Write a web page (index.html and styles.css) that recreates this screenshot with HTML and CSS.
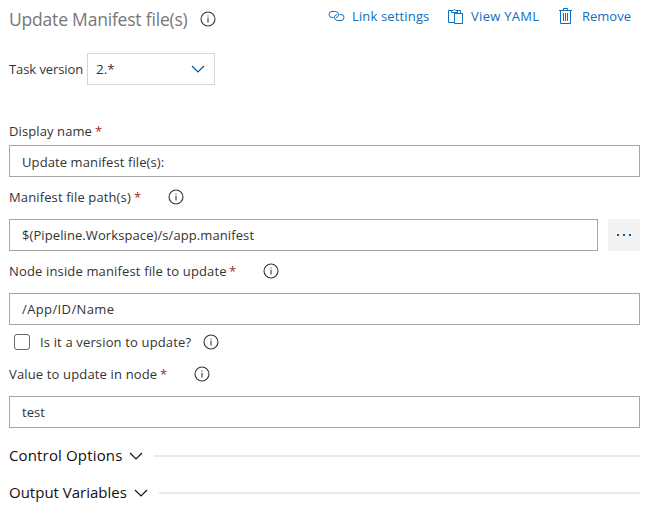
FILE: index.html
```
<!DOCTYPE html>
<html lang="en">
<head>
<meta charset="utf-8">
<title>Update Manifest file(s)</title>
<link rel="stylesheet" href="styles.css">
</head>
<body>
<svg class="defs" width="0" height="0" aria-hidden="true">
  <symbol id="info" viewBox="0 0 16 16"><circle cx="8" cy="8" r="7"/><path d="M8 6.8v4.7M8 4.4v1.2"/></symbol>
  <symbol id="chevron" viewBox="0 0 14 8"><path d="M1 1l6 6 6-6"/></symbol>
</svg>
<main class="panel">
  <header class="header">
    <h1 class="title">Update Manifest file(s)</h1>
    <svg class="info"><use href="#info"/></svg>
    <nav class="actions">
      <a class="action link"><svg class="icon" viewBox="0 0 17 12"><path d="M5.500 7.500H4A3 3 0 0 1 4 1.500H7.500A3 3 0 0 1 10.300 5.500Q9.800 7.300 8 7.500M11.500 4.500H13A3 3 0 0 1 13 10.500H9.500A3 3 0 0 1 6.700 6.500Q7.200 4.700 9 4.500"/></svg><span>Link settings</span></a>
      <a class="action yaml"><svg class="icon" viewBox="0 0 15 16"><path d="M6 14.500H.5v-12H4M9 2.500h3.500v3M3.500 4.500v-2h1.700a1.400 1.400 0 0 1 2.600 0h1.700v2zM6.500 5.500h8v10h-8z"/></svg><span>View YAML</span></a>
      <a class="action remove"><svg class="icon" viewBox="0 0 13 16"><path d="M0 2.500H13M4.500 2.500V.5H8.500V2.500M1.500 2.500V15.500H11.500V2.500M4.500 5V13M6.500 5V13M8.500 5V13"/></svg><span>Remove</span></a>
    </nav>
  </header>
  <div class="version">
    <label class="version-label">Task version</label>
    <div class="select"><span>2.*</span><svg class="chevron"><use href="#chevron"/></svg></div>
  </div>
  <div class="label first"><span class="t-display">Display name</span><b>*</b></div>
  <div class="input name"><span class="v-display">Update manifest file(s):</span></div>
  <div class="label"><span class="t-path">Manifest file path(s)</span><b>*</b><svg class="info"><use href="#info"/></svg></div>
  <div class="row"><div class="input"><span class="v-path">$(Pipeline.Workspace)/s/app.manifest</span></div><button class="more"><i></i><i></i><i></i></button></div>
  <div class="label"><span class="t-node">Node inside manifest file to update</span><b>*</b><svg class="info"><use href="#info"/></svg></div>
  <div class="input"><span class="v-node">/App/ID/Name</span></div>
  <div class="check"><span class="box"></span><span class="t-check">Is it a version to update?</span><svg class="info"><use href="#info"/></svg></div>
  <div class="label value"><span class="t-value">Value to update in node</span><b>*</b><svg class="info"><use href="#info"/></svg></div>
  <div class="input"><span class="v-test">test</span></div>
  <div class="section control"><span>Control Options</span><svg class="chevron"><use href="#chevron"/></svg><hr></div>
  <div class="section output"><span>Output Variables</span><svg class="chevron"><use href="#chevron"/></svg><hr></div>
</main>
</body>
</html>
```
FILE: styles.css
```
* { box-sizing: border-box; }
body { margin: 0; background: #fff; color: #333; font: 13px/20px "Open Sans", "Noto Sans", sans-serif; }
.defs { position: absolute; }
svg { display: block; flex: none; fill: none; stroke: currentColor; }
span, .version-label, .title { white-space: nowrap; }
.panel { width: 640px; padding-left: 9px; }
.header { display: flex; align-items: center; height: 38px; }
.title { width: 191px; margin: 0; font-size: 17.5px; font-weight: 400; line-height: 24px; color: #777; letter-spacing: -.2px; }
.info { width: 16px; height: 16px; stroke-width: 1.1; color: #333; }
.actions { display: flex; margin-left: 112px; color: #106ebe; height: 32px; margin-bottom: 6px; }
.action { display: flex; align-items: center; }
.link { width: 120px; letter-spacing: .15px; }
.yaml { width: 111px; letter-spacing: .3px; }
.link .icon { width: 17px; height: 12px; margin-right: 7px; }
.yaml .icon { width: 15px; height: 16px; margin-right: 8px; }
.remove .icon { width: 13px; height: 16px; margin-right: 10px; }
.version { display: flex; margin-top: 15px; height: 32px; align-items: center; }
.version-label { width: 78px; padding-bottom: 1px; letter-spacing: -.08px; }
.select { display: flex; align-items: center; justify-content: space-between; width: 128px; height: 32px; padding: 0 9px 0 8px; border: 1px solid #d6d6d6; }
.select span { font-size: 13.500px; }
.chevron { width: 14px; height: 8px; stroke-width: 1.2; }
.select .chevron { color: #005a9e; }
.label { display: flex; align-items: center; height: 42px; padding-bottom: 2px; }
.label.first { margin-top: 36px; height: 24px; padding: 0 0 4px; }
.label b { width: 7px; font-weight: 400; color: #a4262c; }
.label .info { margin-left: 27px; }
.input { display: flex; align-items: center; flex: 1; height: 32px; min-height: 32px; padding: 0 12px; border: 1px solid #a6a6a6; }
.input.name { padding-top: 2px; }
.row { display: flex; gap: 10px; }
.more { display: flex; align-items: center; justify-content: center; gap: 4px; width: 32px; height: 32px; padding: 0; border: 0; background: #f3f3f3; }
.more i { width: 2px; height: 2px; background: #005a9e; }
.check { display: flex; align-items: center; height: 34px; padding-left: 5px; }
.box { width: 16px; height: 16px; margin-right: 10px; border: 1px solid #666; border-radius: 3px; }
.t-check { width: 163px; letter-spacing: .15px; }
.label.value { height: 37px; padding-bottom: 7px; }
.t-display { width: 86px; letter-spacing: .1px; }
.t-path { width: 125px; letter-spacing: .12px; }
.t-node { width: 220px; letter-spacing: .15px; }
.t-value { width: 151px; letter-spacing: .15px; }
.v-display { letter-spacing: .1px; }
.v-path { letter-spacing: .09px; }
.v-node { letter-spacing: .38px; }
.section { display: flex; align-items: center; height: 37px; font-size: 15px; color: #111; }
.section.control { margin-top: 9px; }
.section span { padding-bottom: 2px; }
.control span { width: 120px; letter-spacing: .15px; }
.output span { width: 125px; }
.section hr { flex: 1; height: 2px; margin: 0 0 0 11px; border: 0; background: #eaeaea; }
```
